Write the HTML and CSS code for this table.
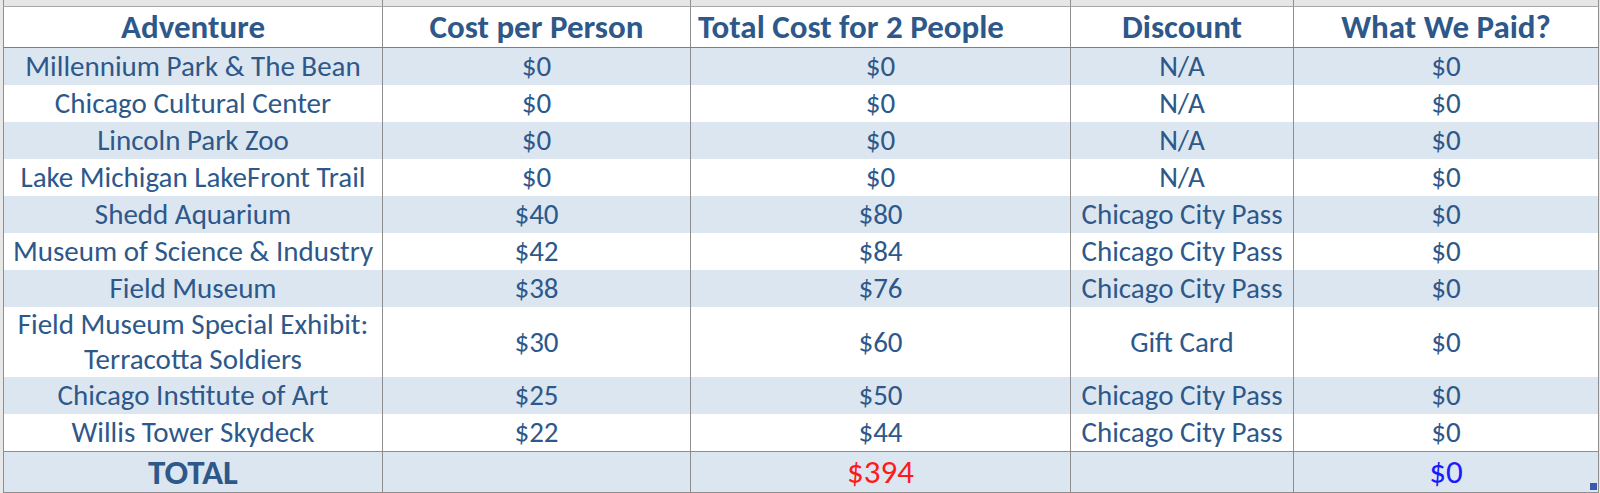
FILE: index.html
```html
<!DOCTYPE html>
<html>
<head>
<meta charset="utf-8">
<title>Chicago Adventures Cost</title>
<link rel="stylesheet" href="styles.css">
</head>
<body>
<div class="sheet">
<table class="costs">
  <colgroup>
    <col class="c1"><col class="c2"><col class="c3"><col class="c4"><col class="c5">
  </colgroup>
  <tr class="strip"><td></td><td></td><td></td><td></td><td></td></tr>
  <tr class="head">
    <th>Adventure</th><th>Cost per Person</th><th class="left">Total Cost for 2 People</th><th>Discount</th><th>What We Paid?</th>
  </tr>
  <tr class="band"><td>Millennium Park &amp; The Bean</td><td>$0</td><td>$0</td><td>N/A</td><td>$0</td></tr>
  <tr><td>Chicago Cultural Center</td><td>$0</td><td>$0</td><td>N/A</td><td>$0</td></tr>
  <tr class="band"><td>Lincoln Park Zoo</td><td>$0</td><td>$0</td><td>N/A</td><td>$0</td></tr>
  <tr><td>Lake Michigan LakeFront Trail</td><td>$0</td><td>$0</td><td>N/A</td><td>$0</td></tr>
  <tr class="band"><td>Shedd Aquarium</td><td>$40</td><td>$80</td><td>Chicago City Pass</td><td>$0</td></tr>
  <tr><td>Museum of Science &amp; Industry</td><td>$42</td><td>$84</td><td>Chicago City Pass</td><td>$0</td></tr>
  <tr class="band"><td>Field Museum</td><td>$38</td><td>$76</td><td>Chicago City Pass</td><td>$0</td></tr>
  <tr class="tall"><td>Field Museum Special Exhibit:<br>Terracotta Soldiers</td><td>$30</td><td>$60</td><td>Gift Card</td><td>$0</td></tr>
  <tr class="band"><td>Chicago Institute of Art</td><td>$25</td><td>$50</td><td>Chicago City Pass</td><td>$0</td></tr>
  <tr><td>Willis Tower Skydeck</td><td>$22</td><td>$44</td><td>Chicago City Pass</td><td>$0</td></tr>
  <tr class="band total"><td class="label">TOTAL</td><td></td><td class="red">$394</td><td></td><td class="blue">$0</td></tr>
</table>
<span class="handle"></span>
</div>
</body>
</html>
```
FILE: styles.css
```css
html, body {
  margin: 0;
  padding: 0;
  background: #ffffff;
}
.sheet {
  position: relative;
  width: 1600px;
  height: 493px;
  padding-left: 3px;
  box-sizing: border-box;
  background: #e8e8e8;
  overflow: hidden;
}
.costs {
  border-collapse: collapse;
  table-layout: fixed;
  width: 1595px;
  font-family: Carlito, Lato, "Liberation Sans", sans-serif;
  color: #2d5889;
  background: #ffffff;
}
.c1 { width: 379px; }
.c2 { width: 308px; }
.c3 { width: 380px; }
.c4 { width: 223px; }
.c5 { width: 305px; }
.costs td, .costs th {
  border-left: 1px solid #8e8e8e;
  border-right: 1px solid #8e8e8e;
  padding: 0;
  text-align: center;
  vertical-align: middle;
  white-space: nowrap;
  overflow: visible;
}
.costs td {
  font-size: 29px;
  line-height: 35px;
  height: 37px;
}
.strip td {
  height: 6px;
  background: #e6e6e6;
  border-bottom: 1px solid #a8a8a8;
}
.head th {
  height: 40px;
  font-size: 33px;
  font-weight: bold;
  line-height: 36px;
  border-bottom: 1px solid #5b86b9;
}
.head th.left {
  text-align: left;
  padding-left: 7px;
}
.band td {
  background: #dce6f1;
}
.tall td {
  height: 68px;
}
.total td {
  height: 40px;
  font-size: 33px;
  border-top: 1px solid #8e8e8e;
  border-bottom: 1px solid #8e8e8e;
}
.total .label {
  font-size: 35px;
  font-weight: bold;
}
.red { color: #ff1a1a; }
.blue { color: #1a1aff; }
.handle {
  position: absolute;
  left: 1590px;
  top: 483px;
  width: 7px;
  height: 7px;
  background: #3d57b3;
}
```
